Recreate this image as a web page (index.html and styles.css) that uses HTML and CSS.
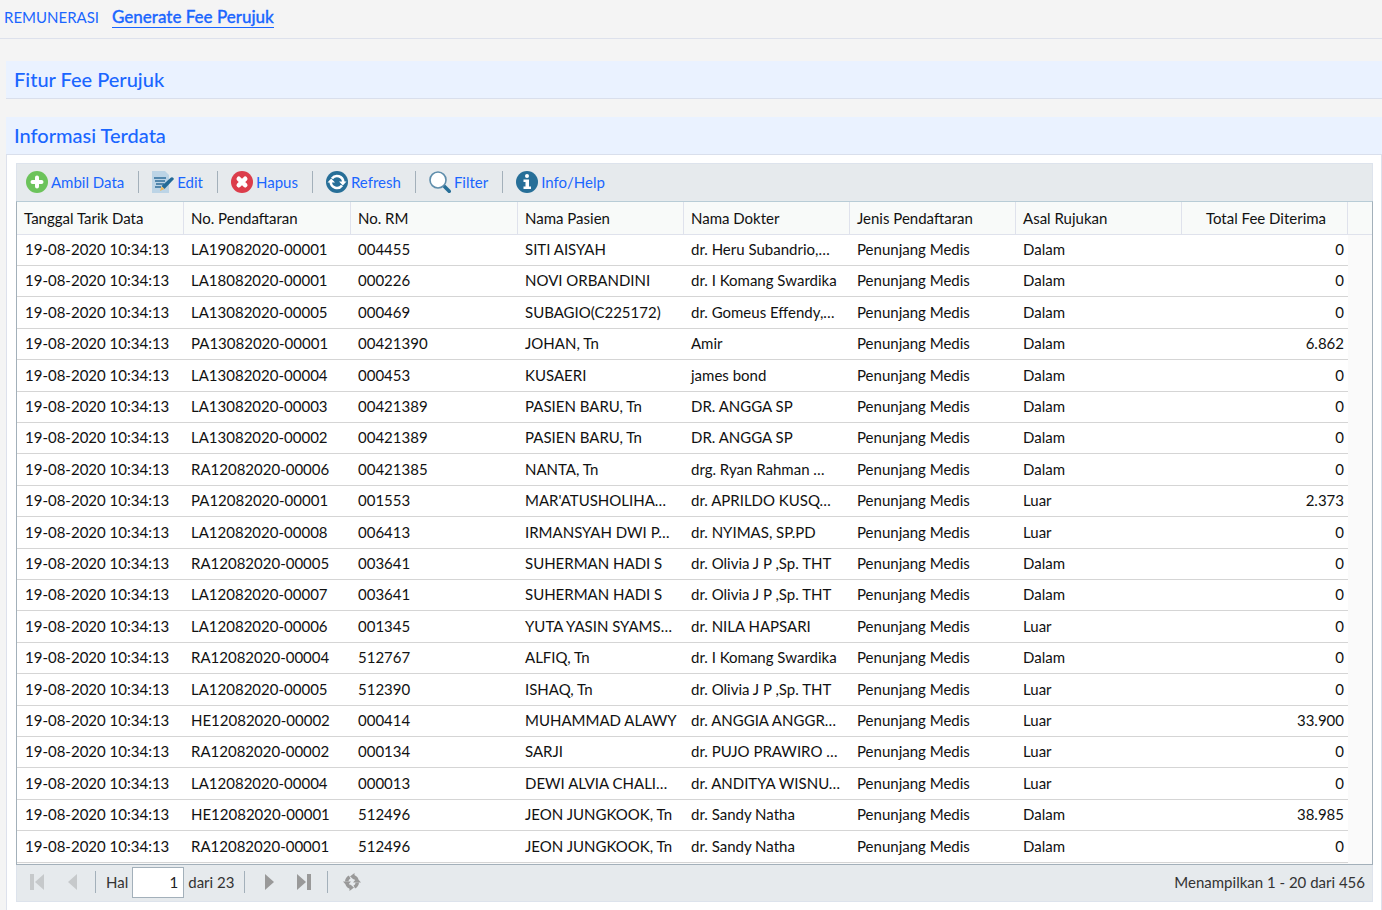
FILE: index.html
```html
<!DOCTYPE html>
<html lang="id">
<head>
<meta charset="utf-8">
<title>Generate Fee Perujuk</title>
<link rel="stylesheet" href="styles.css">
</head>
<body>
<nav class="crumbs">
  <a class="crumb" href="#">REMUNERASI</a>
  <a class="crumb current" href="#">Generate Fee Perujuk</a>
</nav>
<main class="page">
  <section class="panel">
    <h2 class="panel-title">Fitur Fee Perujuk</h2>
  </section>
  <section class="panel">
    <h2 class="panel-title">Informasi Terdata</h2>
    <div class="panel-body">
      <div class="toolbar">
        <button class="tool" type="button"><svg class="icon" viewBox="0 0 22 22"><circle cx="11" cy="11" r="11" fill="#6cc35b"/><path d="M11 6.500v9M6.500 11h9" stroke="#fff" stroke-width="4" stroke-linecap="round"/></svg>Ambil Data</button>
        <span class="sep"></span>
        <button class="tool" type="button"><svg class="icon" viewBox="0 0 22 22"><path d="M0 0h13l4 4v18H0z" fill="#bcd4e6"/><path d="M2 7h12M3 10h10M4 13h8M3 16h6" stroke="#5287ad" stroke-width="2"/><path d="M9.500 15L19 6.500q2-1 3 1.500L12.500 18z" fill="#246a96"/><path d="M9.500 15.500L8 20l4.500-2z" fill="#f0b85a"/></svg>Edit</button>
        <span class="sep"></span>
        <button class="tool" type="button"><svg class="icon" viewBox="0 0 22 22"><circle cx="11" cy="11" r="11" fill="#dc3d4b"/><path d="M7.800 7.800l6.400 6.400M14.200 7.800l-6.400 6.400" stroke="#fff" stroke-width="4.600" stroke-linecap="round"/></svg>Hapus</button>
        <span class="sep"></span>
        <button class="tool" type="button"><svg class="icon" viewBox="0 0 22 22"><circle cx="11" cy="11" r="11" fill="#276f98"/><path d="M6 7.500a6.300 6.300 0 0 1 11.300 3.500M16 14.500A6.300 6.300 0 0 1 4.700 11" fill="none" stroke="#fff" stroke-width="2.600"/><path d="M13 10.500h7.500l-3.700 4zM1.500 11.500H9l-3.800-4z" fill="#fff"/></svg>Refresh</button>
        <span class="sep"></span>
        <button class="tool" type="button"><svg class="icon" viewBox="0 0 22 22"><path d="M14.500 14.500l7 7" stroke="#276f98" stroke-width="3.600"/><circle cx="9" cy="9" r="8" fill="#fff" stroke="#5e8dab" stroke-width="1.600"/></svg>Filter</button>
        <span class="sep"></span>
        <button class="tool" type="button"><svg class="icon" viewBox="0 0 22 22"><circle cx="11" cy="11" r="11" fill="#276f98"/><circle cx="11" cy="5" r="2" fill="#fff"/><path d="M7.500 8.500h5.500v7h2V18H7.500v-2.500h2v-4.500h-2z" fill="#fff"/></svg>Info/Help</button>
      </div>
      <div class="grid">
        <table class="data">
          <colgroup><col class="wide-col"><col class="wide-col"><col class="wide-col"><col><col><col><col><col><col class="gutter-col"></colgroup>
          <thead><tr><th>Tanggal Tarik Data</th><th>No. Pendaftaran</th><th>No. RM</th><th>Nama Pasien</th><th>Nama Dokter</th><th>Jenis Pendaftaran</th><th>Asal Rujukan</th><th class="center">Total Fee Diterima</th><td class="gutter-head"></td></tr></thead>
          <tbody id="rows"></tbody>
        </table>
      </div>
      <div class="pager">
        <button class="page-btn" type="button" disabled aria-label="Halaman pertama"><svg viewBox="0 0 18 18"><path d="M2 1h4v16H2zM16 1v16L7 9z" fill="#c6c9cb"/></svg></button>
        <button class="page-btn" type="button" disabled aria-label="Sebelumnya"><svg viewBox="0 0 18 18"><path d="M14 1v16L5 9z" fill="#c6c9cb"/></svg></button>
        <span class="sep pager-sep"></span>
        <label class="page-label" for="page">Hal</label>
        <input class="page-input" id="page" type="text" value="1">
        <span class="page-total">dari 23</span>
        <span class="sep pager-sep after"></span>
        <button class="page-btn" type="button" aria-label="Berikutnya"><svg viewBox="0 0 18 18"><path d="M5 1v16l9-8z" fill="#999"/></svg></button>
        <button class="page-btn" type="button" aria-label="Halaman terakhir"><svg viewBox="0 0 18 18"><path d="M12 1h4v16h-4zM2 1v16l9-8z" fill="#999"/></svg></button>
        <span class="sep pager-sep after"></span>
        <button class="page-btn" type="button" aria-label="Muat ulang"><svg viewBox="0 0 18 18"><path d="M3.700 8.500a5.600 5.600 0 0 1 3-4.600M14.300 9.500a5.600 5.600 0 0 1-3 4.600M9.500 3.500a5.500 5.500 0 0 1 4.500 3.500M8.500 14.500A5.500 5.500 0 0 1 4 11" fill="none" stroke="#999" stroke-width="3.400"/><path d="M0 8.500h8L4 13zM18 9.500h-8L14 5zM11.500 0v7L7 3.500zM6.500 18v-7l4.500 3.500z" fill="#999"/></svg></button>
        <span class="summary">Menampilkan 1 - 20 dari 456</span>
      </div>
    </div>
  </section>
</main>
<script src="app.js"></script>
</body>
</html>
```
FILE: styles.css
```css
* { box-sizing: border-box; }
body {
  margin: 0;
  background: #f4f4f4;
  color: #111;
  font: 15px/20px Lato, "Open Sans", sans-serif;
}
button, input { font: inherit; }
.crumbs {
  display: flex;
  align-items: center;
  gap: 13px;
  height: 39px;
  padding: 0 4px 4px;
  border-bottom: 1px solid #dde1ec;
}
.crumb { color: #1a66ff; text-decoration: none; }
.crumb.current {
  font-size: 17px;
  font-weight: 500;
  line-height: 20px;
  border-bottom: 1px solid #1a66ff;
  -webkit-text-stroke: 0.3px #1a66ff;
}
.page {
  display: flex;
  flex-direction: column;
  gap: 18px;
  padding: 22px 0 0 6px;
}
.panel-title {
  margin: 0;
  padding: 0 8px;
  height: 38px;
  line-height: 36px;
  font-size: 20px;
  font-weight: 500;
  color: #1a66ff;
  background: #eaf2ff;
  border-bottom: 1px solid #d9dfec;
}
.panel-body {
  padding: 8px 8px 8px 9px;
  background: #fff;
  border: 1px solid #dde1ec;
  border-top: 0;
}
.toolbar {
  display: flex;
  align-items: center;
  height: 38px;
  padding: 0 9px 2px;
  background: #e6eaed;
  border: 1px solid #dde3ec;
  border-bottom: 0;
}
.tool {
  display: flex;
  align-items: center;
  gap: 3px;
  padding: 0;
  border: 0;
  background: none;
  color: #1a66ff;
}
.icon { width: 22px; height: 22px; }
.sep {
  width: 1px;
  height: 22px;
  margin: 0 13px 0 14px;
  background: #a3b0ba;
}
.grid {
  border: 1px solid #a3b0ba;
  border-top-color: #b8ccd6;
  background: #fafafa;
  padding-bottom: 1px;
}
.data {
  width: 100%;
  table-layout: fixed;
  border-collapse: separate;
  border-spacing: 0;
}
.wide-col { width: 167px; }
.gutter-col { width: 24px; }
.data th, .data td {
  padding: 0 4px 1px 7px;
  overflow: hidden;
  white-space: nowrap;
  text-align: left;
  font-weight: 400;
}
.data th, .gutter-head {
  height: 33px;
  background: #f8faf9;
  border-bottom: 1px solid #dfe2ec;
}
.data th { border-right: 1px solid #dfe2ec; }
.data th.center { text-align: center; }
.data tbody td {
  height: 31px;
  padding-bottom: 2px;
  background: #fff;
  border-bottom: 1px solid #d5d5d5;
}
.data tbody tr:nth-child(5n+3) td, .data tbody tr:nth-child(5n+5) td { height: 32px; }
.data tbody td:first-child { padding-left: 8px; }
.data td.amount { text-align: right; }
.data tbody td.gutter { background: #fafafa; border-bottom: 0; }
.pager {
  display: flex;
  align-items: center;
  height: 37px;
  padding: 0 7px 2px 11px;
  background: #e6eaed;
  border: 1px solid #dde3ec;
  border-top: 0;
  color: #333;
}
.page-btn {
  width: 18px;
  height: 18px;
  margin-right: 17px;
  padding: 0;
  border: 0;
  background: none;
}
.page-btn svg { display: block; width: 18px; height: 18px; }
.pager-sep { margin: 0 10px 0 -3px; }
.pager-sep.after { margin-right: 15px; }
.page-input {
  width: 52px;
  height: 31px;
  margin: 0 4px;
  padding: 0 5px;
  border: 1px solid #a3b0ba;
  background: #fff;
  color: #222;
  text-align: right;
}
.page-total { margin-right: 13px; }
.summary { margin-left: auto; }
```
FILE: app.js
```js
const rows = [
  ["LA19082020-00001", "004455", "SITI AISYAH", "dr. Heru Subandrio,…", "Dalam", "0"],
  ["LA18082020-00001", "000226", "NOVI ORBANDINI", "dr. I Komang Swardika", "Dalam", "0"],
  ["LA13082020-00005", "000469", "SUBAGIO(C225172)", "dr. Gomeus Effendy,…", "Dalam", "0"],
  ["PA13082020-00001", "00421390", "JOHAN, Tn", "Amir", "Dalam", "6.862"],
  ["LA13082020-00004", "000453", "KUSAERI", "james bond", "Dalam", "0"],
  ["LA13082020-00003", "00421389", "PASIEN BARU, Tn", "DR. ANGGA SP", "Dalam", "0"],
  ["LA13082020-00002", "00421389", "PASIEN BARU, Tn", "DR. ANGGA SP", "Dalam", "0"],
  ["RA12082020-00006", "00421385", "NANTA, Tn", "drg. Ryan Rahman …", "Dalam", "0"],
  ["PA12082020-00001", "001553", "MAR'ATUSHOLIHA…", "dr. APRILDO KUSQ…", "Luar", "2.373"],
  ["LA12082020-00008", "006413", "IRMANSYAH DWI P…", "dr. NYIMAS, SP.PD", "Luar", "0"],
  ["RA12082020-00005", "003641", "SUHERMAN HADI S", "dr. Olivia J P ,Sp. THT", "Dalam", "0"],
  ["LA12082020-00007", "003641", "SUHERMAN HADI S", "dr. Olivia J P ,Sp. THT", "Dalam", "0"],
  ["LA12082020-00006", "001345", "YUTA YASIN SYAMS…", "dr. NILA HAPSARI", "Luar", "0"],
  ["RA12082020-00004", "512767", "ALFIQ, Tn", "dr. I Komang Swardika", "Dalam", "0"],
  ["LA12082020-00005", "512390", "ISHAQ, Tn", "dr. Olivia J P ,Sp. THT", "Luar", "0"],
  ["HE12082020-00002", "000414", "MUHAMMAD ALAWY", "dr. ANGGIA ANGGR…", "Luar", "33.900"],
  ["RA12082020-00002", "000134", "SARJI", "dr. PUJO PRAWIRO …", "Luar", "0"],
  ["LA12082020-00004", "000013", "DEWI ALVIA CHALI…", "dr. ANDITYA WISNU…", "Luar", "0"],
  ["HE12082020-00001", "512496", "JEON JUNGKOOK, Tn", "dr. Sandy Natha", "Dalam", "38.985"],
  ["RA12082020-00001", "512496", "JEON JUNGKOOK, Tn", "dr. Sandy Natha", "Dalam", "0"]
];

const body = document.getElementById("rows");
for (const [reg, rm, patient, doctor, origin, fee] of rows) {
  const tr = body.insertRow();
  for (const text of ["19-08-2020 10:34:13", reg, rm, patient, doctor, "Penunjang Medis", origin, fee]) {
    tr.insertCell().textContent = text;
  }
  tr.lastChild.className = "amount";
  tr.insertCell().className = "gutter";
}
```
